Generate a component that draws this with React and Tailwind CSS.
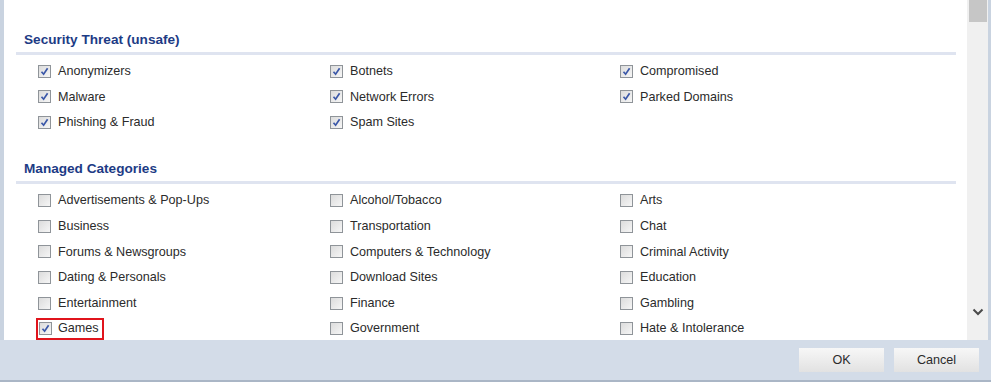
import React from "react";

const THREATS = [
    ["Anonymizers", "Botnets", "Compromised"],
    ["Malware", "Network Errors", "Parked Domains"],
    ["Phishing & Fraud", "Spam Sites", null],
];

const MANAGED = [
    ["Advertisements & Pop-Ups", "Alcohol/Tobacco", "Arts"],
    ["Business", "Transportation", "Chat"],
    ["Forums & Newsgroups", "Computers & Technology", "Criminal Activity"],
    ["Dating & Personals", "Download Sites", "Education"],
    ["Entertainment", "Finance", "Gambling"],
    ["Games", "Government", "Hate & Intolerance"],
];

function Box({ checked }) {
    return (
        <span className="w-[13px] h-[13px] shrink-0 border border-[#8f9499] bg-gradient-to-br from-[#dcdcdc] to-[#f6f6f6] flex items-center justify-center">
            {checked && (
                <svg width="9" height="9" viewBox="0 0 9 9">
                    <path d="M1.5 4.8 L3.6 7.2 L7.6 1.2" fill="none" stroke="#3a57a8" strokeWidth="1.7" />
                </svg>
            )}
        </span>
    );
}

function Item({ label, checked, highlight }) {
    if (!label) return <div />;
    return (
        <div className="h-[25.6px] flex items-center">
            <div
                className={
                    highlight
                        ? "flex items-center gap-[6px] -ml-[2px] pl-[1px] pr-[3px] h-[22px] border-2 border-[#e0141c]"
                        : "flex items-center gap-[7px]"
                }>
                <Box checked={checked} />
                <span className="text-[12.6px] text-[#2b2b2b] leading-none">{label}</span>
            </div>
        </div>
    );
}

function Section({ title, rows, checkedAll, checkedSet }) {
    return (
        <div>
            <div className="pl-[8px] text-[13.6px] font-bold text-[#1d3b85] leading-none pb-[5px]">{title}</div>
            <div className="h-[3px] bg-[#dfe4f0] mr-[11px]" />
            <div className="pl-[22px] pt-[4px] grid grid-cols-[292px_290px_1fr]">
                {rows.flat().map((label, i) => (
                    <Item
                        key={i}
                        label={label}
                        checked={checkedAll || (checkedSet && checkedSet.includes(label))}
                        highlight={label === "Games"}
                    />
                ))}
            </div>
        </div>
    );
}

export default function App() {
    return (
        <div className="w-[991px] h-[382px] bg-[#d3dce8] flex flex-col font-['Liberation_Sans',Arial,sans-serif] overflow-hidden">
            <div className="h-[340px] flex">
                <div className="w-[4px] bg-[#c9d3e0]" />
                <div className="flex-1 bg-white pl-[12px] pt-[33px]">
                    <Section title="Security Threat (unsafe)" rows={THREATS} checkedAll />
                    <div className="h-[27px]" />
                    <Section title="Managed Categories" rows={MANAGED} checkedSet={["Games"]} />
                </div>
                <div className="w-[21px] bg-[#f0f0f0] flex flex-col items-center">
                    <div className="w-[18px] h-[22px] bg-[#c6c6c6]" />
                    <div className="flex-1" />
                    <svg width="12" height="8" viewBox="0 0 12 8" className="mb-[24px]">
                        <path d="M1.5 1.5 L6 6 L10.5 1.5" fill="none" stroke="#4a4a4a" strokeWidth="2" />
                    </svg>
                </div>
                <div className="w-[3px] bg-[#c9d3e0]" />
            </div>
            <div className="flex-1 flex justify-end items-start pt-[8px] pr-[12px] gap-[10px] border-b-[2px] border-[#aab6c6]">
                <button className="w-[85px] h-[24px] bg-gradient-to-b from-[#f7f7f7] to-[#e2e2e2] text-[12.6px] text-[#2b2b2b]">OK</button>
                <button className="w-[85px] h-[24px] bg-gradient-to-b from-[#f7f7f7] to-[#e2e2e2] text-[12.6px] text-[#2b2b2b]">Cancel</button>
            </div>
        </div>
    );
}
